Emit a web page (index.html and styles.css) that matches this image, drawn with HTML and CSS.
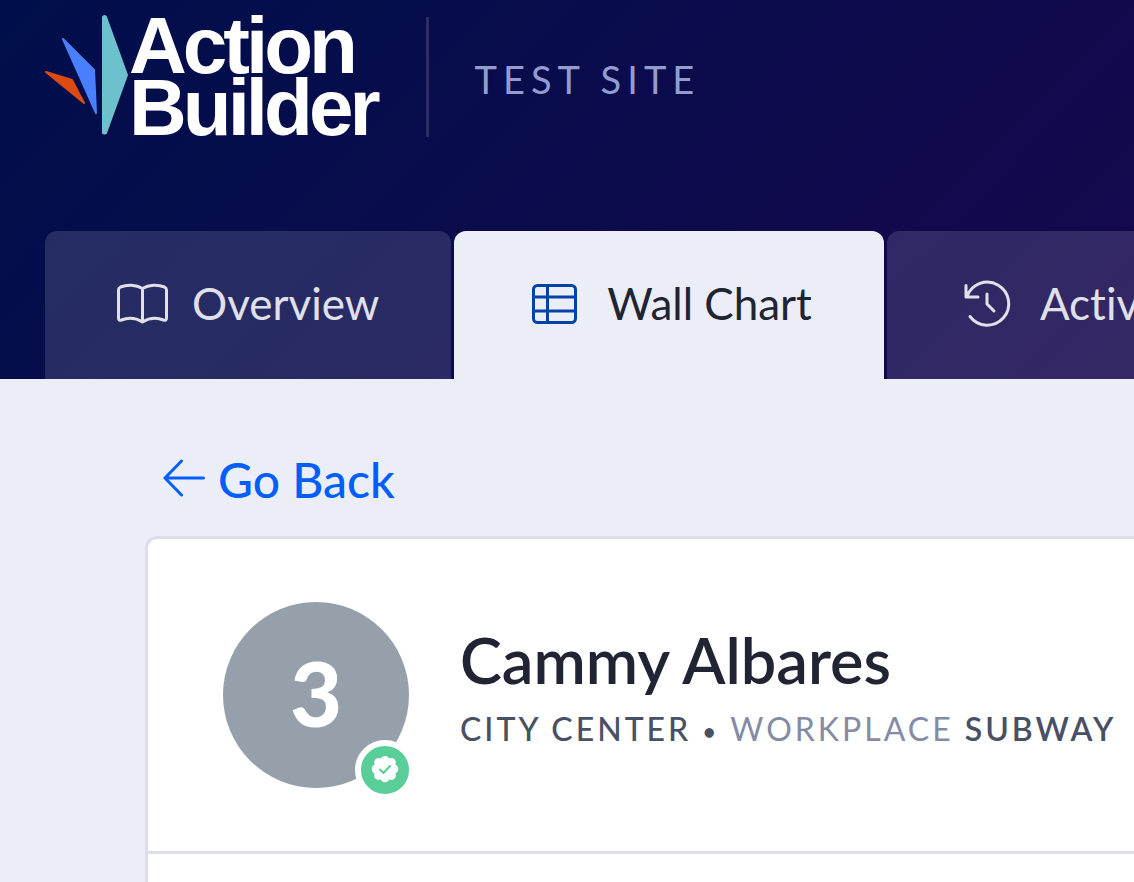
FILE: index.html
```html
<!DOCTYPE html>
<html lang="en">
<head>
    <meta charset="UTF-8">
    <meta name="viewport" content="width=device-width, initial-scale=1.0">
    <title>Action Builder</title>
    <link rel="stylesheet" href="styles.css">
</head>
<body>
    <header class="header">
        <div class="brand">
            <a class="logo" href="#">
                <svg class="logo-mark" viewBox="0 0 84 120" aria-hidden="true">
                    <path d="M1 57 L27 65 L39 88 Z" fill="#dd4a12" stroke="#dd4a12"/>
                    <path d="M18 24 L49 55 L51 98 Z" fill="#4a80ff" stroke="#4a80ff"/>
                    <path d="M58 2 Q60 0 61 2 L82 60 L61 118 Q60 119 58 118 Z" fill="#6dc1cd" stroke="#6dc1cd"/>
                </svg>
                <span class="logo-text">Action<br>Builder</span>
            </a>
            <div class="site-name">TEST SITE</div>
        </div>

        <nav class="tabs">
            <a class="tab" href="#">
                <svg class="tab-icon book" viewBox="0 0 51 48" aria-hidden="true">
                    <path d="M25.500 7.500 C19 3.500 10 3.500 3.500 6 Q1.500 7 1.500 9 V37 Q1.500 40 4.500 39 C11 36.500 19 37 25.500 41 C32 37 40 36.500 46.500 39 Q49.500 40 49.500 37 V9 Q49.500 7 47.500 6 C41 3.500 32 3.500 25.500 7.500 Z M25.500 7.500 V41"/>
                </svg>
                <span class="tab-label">Overview</span>
            </a>
            <a class="tab active" href="#">
                <svg class="tab-icon" viewBox="0 0 57 48" aria-hidden="true">
                    <rect x="7.500" y="4.500" width="42" height="37" rx="4"/>
                    <path d="M7.500 16 H49.500 M7.500 30 H49.500 M21.500 4.500 V41.500"/>
                </svg>
                <span class="tab-label">Wall Chart</span>
            </a>
            <a class="tab" href="#">
                <svg class="tab-icon" viewBox="0 0 57 48" aria-hidden="true">
                    <path d="M7 4.500 V16 H19 M8 15.500 A21.500 21.500 0 1 1 11 35.500 M28 13 V23 L35 30"/>
                </svg>
                <span class="tab-label">Activity</span>
            </a>
        </nav>
    </header>

    <main class="content">
        <a class="back-link" href="#">
            <svg class="back-icon" viewBox="0 0 42 42" aria-hidden="true">
                <path d="M40.500 19 H2 M18.500 2 L2 19 L18.500 36"/>
            </svg>
            <span>Go Back</span>
        </a>

        <section class="card">
            <div class="profile">
                <div class="avatar">
                    3
                    <span class="badge">
                        <svg class="badge-icon" viewBox="0 0 28 28" aria-hidden="true">
                            <g fill="#ffffff">
                                <circle cx="14" cy="13" r="10.500"/>
                                <circle cx="14" cy="4.500" r="4.500"/>
                                <circle cx="20.400" cy="6.600" r="4.500"/>
                                <circle cx="22.800" cy="13" r="4.500"/>
                                <circle cx="20.400" cy="19.400" r="4.500"/>
                                <circle cx="14" cy="21.800" r="4.500"/>
                                <circle cx="7.600" cy="19.400" r="4.500"/>
                                <circle cx="5.200" cy="13" r="4.500"/>
                                <circle cx="7.600" cy="6.600" r="4.500"/>
                            </g>
                            <path d="M9 13.500 L12.500 17 L19 10" fill="none" stroke="#59ce99" stroke-width="2" stroke-linecap="round" stroke-linejoin="round"/>
                        </svg>
                    </span>
                </div>
                <div class="profile-info">
                    <h1 class="profile-name">Cammy Albares</h1>
                    <p class="profile-meta">CITY CENTER <span class="meta-dot">•</span> <span class="meta-label">WORKPLACE</span> <span class="meta-value">SUBWAY</span></p>
                </div>
            </div>
        </section>
    </main>
</body>
</html>
```
FILE: styles.css
```css
:root {
    --page-bg: #ebeef6;
    --border-color: #dcdfea;
    --link-color: #005ff8;
    --text-color: #212432;
    --meta-color: #4a5064;
    --muted-color: #858ba3;
}

* {
    margin: 0;
    padding: 0;
    box-sizing: border-box;
}

body {
    min-height: 100vh;
    display: flex;
    flex-direction: column;
    background-color: var(--page-bg);
    color: var(--text-color);
    font-family: Lato, 'Open Sans', sans-serif;
    font-variant-ligatures: none;
    overflow-x: hidden;
}

a {
    color: inherit;
    text-decoration: none;
}

svg {
    display: block;
    flex: none;
}

/* Header */
.header {
    padding: 15px 0 0 45px;
    background: linear-gradient(135deg, #000f4b, #16084e);
    overflow: hidden;
}

.brand {
    display: flex;
    align-items: center;
    margin-bottom: 92px;
}

.logo {
    display: flex;
    align-items: flex-start;
    padding-right: 49px;
    color: #ffffff;
}

.logo-mark {
    width: 84px;
    height: 120px;
    stroke-width: 2;
    stroke-linejoin: round;
}

.logo-text {
    font-family: 'Liberation Sans', Arial, sans-serif;
    font-size: 80px;
    font-weight: bold;
    line-height: 62px;
    letter-spacing: -4px;
}

.site-name {
    padding: 4px 0 0 46px;
    border-left: 3px solid #2e2c62;
    color: #939ccd;
    font-size: 38px;
    line-height: 116px;
    letter-spacing: 6px;
}

/* Tabs */
.tabs {
    display: flex;
    gap: 3px;
}

.tab {
    display: flex;
    flex: none;
    align-items: center;
    gap: 24px;
    height: 148px;
    padding: 0 72px;
    border-radius: 12px 12px 0 0;
    background-color: rgba(255, 255, 255, 0.13);
    color: #e0e0ea;
    font-size: 44px;
    line-height: 52px;
}

.tab.active {
    background-color: var(--page-bg);
    color: var(--text-color);
}

.tab-label {
    padding-bottom: 4px;
}

.tab-icon {
    width: 57px;
    height: 48px;
    fill: none;
    stroke: currentColor;
    stroke-width: 3;
    stroke-linecap: round;
    stroke-linejoin: round;
    overflow: visible;
}

.tab-icon.book {
    width: 51px;
}

.tab.active .tab-icon {
    stroke: #0042a6;
}

/* Content */
.content {
    flex: 1;
    display: flex;
    flex-direction: column;
    align-items: flex-start;
    padding: 72px 0 0 145px;
}

.back-link {
    display: flex;
    align-items: center;
    gap: 13px;
    margin: 0 18px 27px;
    color: var(--link-color);
    font-size: 48px;
    font-weight: 500;
    line-height: 58px;
}

.back-icon {
    width: 42px;
    height: 42px;
    fill: none;
    stroke: currentColor;
    stroke-width: 3;
    stroke-linecap: round;
    stroke-linejoin: round;
}

.card {
    flex: 1;
    width: 100%;
    border: 3px solid var(--border-color);
    border-width: 3px 0 0 3px;
    border-radius: 12px 0 0 0;
    background-color: #ffffff;
}

.profile {
    display: flex;
    align-items: center;
    gap: 51px;
    padding: 63px 0 63px 75px;
    border-bottom: 3px solid var(--border-color);
}

.avatar {
    position: relative;
    flex: none;
    width: 186px;
    height: 186px;
    border-radius: 50%;
    background-color: #96a0ab;
    color: #ffffff;
    font-size: 90px;
    font-weight: 900;
    line-height: 180px;
    text-align: center;
}

.badge {
    position: absolute;
    right: -6px;
    bottom: -12px;
    display: flex;
    align-items: center;
    justify-content: center;
    width: 60px;
    height: 60px;
    border: 6px solid #ffffff;
    border-radius: 50%;
    background-color: #59ce99;
}

.badge-icon {
    width: 28px;
    height: 28px;
}

.profile-info {
    padding-bottom: 8px;
}

.profile-name {
    font-size: 63px;
    font-weight: 600;
    line-height: 78px;
}

.profile-meta {
    color: var(--meta-color);
    font-size: 32px;
    font-weight: 500;
    line-height: 60px;
    letter-spacing: 3px;
    white-space: nowrap;
}

.meta-dot {
    font-size: 24px;
}

.meta-label {
    color: var(--muted-color);
    font-weight: 400;
}

.meta-value {
    font-weight: 600;
}
```
